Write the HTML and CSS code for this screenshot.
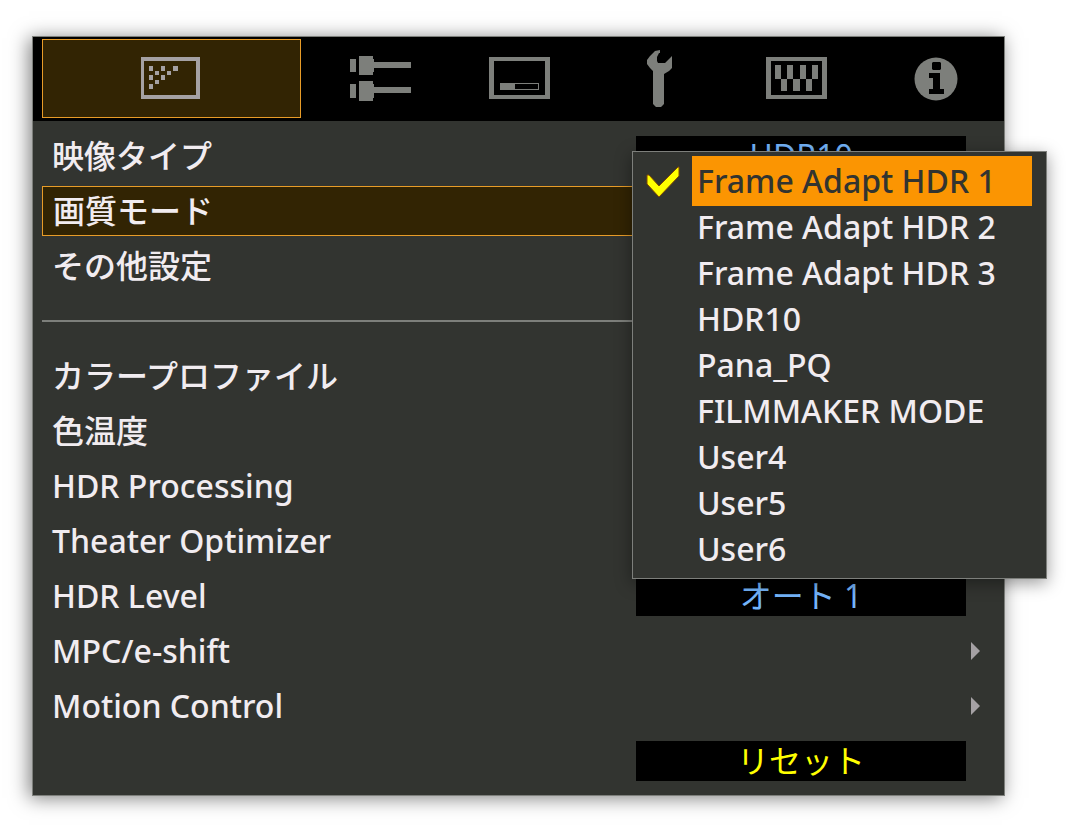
FILE: index.html
```html
<!DOCTYPE html>
<html lang="ja">
<head>
<meta charset="utf-8">
<meta name="viewport" content="width=device-width, initial-scale=1">
<title>画質モード</title>
<link rel="stylesheet" href="styles.css">
</head>
<body>
<main class="panel">
  <nav class="tabs">
    <button class="tab tab-active" type="button" aria-label="画質調整">
      <svg class="icon" width="62" height="60" viewBox="2 1 62 60" shape-rendering="crispEdges" aria-hidden="true">
        <path fill="none" stroke="currentColor" stroke-width="4" d="M3 11H59V49H3Z"/>
        <path fill="currentColor" d="M10 18h4v5h-4zM22 18h4v5h-4zM34 18h5v5h-5zM16 23h4v4h-4zM28 23h4v4h-4zM10 27h4v5h-4zM22 27h4v5h-4zM16 32h4v4h-4zM10 36h4v5h-4z"/>
      </svg>
    </button>
    <button class="tab" type="button" aria-label="入力信号">
      <svg class="icon" width="62" height="60" viewBox="-1 1 62 60" shape-rendering="crispEdges" aria-hidden="true">
        <path fill="currentColor" d="M0 11h6v13H0zM9 8h14v3h1v3h37v6H24v4h-1v3H9zM0 36h6v14H0zM9 33h14v3h1v3h37v6H24v5h-1v3H9z"/>
      </svg>
    </button>
    <button class="tab" type="button" aria-label="設置">
      <svg class="icon" width="62" height="60" viewBox="-1 1 62 60" shape-rendering="crispEdges" aria-hidden="true">
        <path fill="currentColor" fill-rule="evenodd" d="M0 9h61v42H0zM5 13v34h51V13zM11 35h39v7H11zM26 36v5h23v-5z"/>
      </svg>
    </button>
    <button class="tab" type="button" aria-label="表示設定">
      <svg class="icon" width="62" height="60" viewBox="-1 1 62 60" aria-hidden="true">
        <path fill="currentColor" d="M32 2v3h-1l-2 4v4l1 2h7l7-7v12l-3 3-5 3v30l-3 3h-5l-3-3V23l-3-3-3-4v-4l3-4 5-5z"/>
      </svg>
    </button>
    <button class="tab" type="button" aria-label="ファンクション">
      <svg class="icon" width="62" height="60" viewBox="-1 1 62 60" shape-rendering="crispEdges" aria-hidden="true">
        <path fill="currentColor" fill-rule="evenodd" d="M0 9h61v42H0zM5 13v34h51V13z"/>
        <path fill="currentColor" d="M9 17h6v14H9zM21 17h6v14h-6zM34 17h6v14h-6zM46 17h6v14h-6zM15 31h6v12h-6zM27 31h7v12h-7zM40 31h6v12h-6z"/>
      </svg>
    </button>
    <button class="tab" type="button" aria-label="情報">
      <svg class="icon" width="62" height="60" viewBox="-1 0 62 60" aria-hidden="true">
        <circle cx="31" cy="30" r="21.5" fill="currentColor"/>
        <path fill="#000" d="M28 13h7l1 1v6l-1 1h-7l-1-1v-6zM24 24h11v16h4v5H24v-5h4V29h-4z"/>
      </svg>
    </button>
  </nav>

  <ul class="rows">
    <li class="row">
      <span class="label">映像タイプ</span>
      <button class="value" type="button">HDR10</button>
    </li>
    <li class="row">
      <button class="label label-selected" type="button" aria-haspopup="listbox" aria-expanded="true">画質モード</button>
      <div class="anchor">
        <div class="menu" role="listbox" aria-label="画質モード">
          <svg class="check" width="34" height="32" viewBox="0 0 34 32" aria-hidden="true">
            <path fill="#ffff00" stroke="#804800" stroke-width="1" d="M1 9h2l10 11L32 1h1v9L13 31 1 18z"/>
          </svg>
          <button class="option option-active" type="button" role="option" aria-selected="true">Frame Adapt HDR 1</button>
          <button class="option" type="button" role="option">Frame Adapt HDR 2</button>
          <button class="option" type="button" role="option">Frame Adapt HDR 3</button>
          <button class="option" type="button" role="option">HDR10</button>
          <button class="option" type="button" role="option">Pana_PQ</button>
          <button class="option" type="button" role="option">FILMMAKER MODE</button>
          <button class="option" type="button" role="option">User4</button>
          <button class="option" type="button" role="option">User5</button>
          <button class="option" type="button" role="option">User6</button>
        </div>
      </div>
    </li>
    <li class="row"><span class="label">その他設定</span></li>
    <li class="row row-divider" role="separator"></li>
    <li class="row"><span class="label">カラープロファイル</span></li>
    <li class="row"><span class="label">色温度</span></li>
    <li class="row"><span class="label">HDR Processing</span></li>
    <li class="row"><span class="label">Theater Optimizer</span></li>
    <li class="row">
      <span class="label">HDR Level</span>
      <button class="value" type="button">オート 1</button>
    </li>
    <li class="row">
      <button class="label label-link" type="button">MPC/e-shift
        <svg class="arrow" width="9" height="18" viewBox="0 0 9 18" aria-hidden="true"><path fill="currentColor" d="M0 0l9 9-9 9z"/></svg>
      </button>
    </li>
    <li class="row">
      <button class="label label-link" type="button">Motion Control
        <svg class="arrow" width="9" height="18" viewBox="0 0 9 18" aria-hidden="true"><path fill="currentColor" d="M0 0l9 9-9 9z"/></svg>
      </button>
    </li>
    <li class="row"><button class="value value-reset" type="button">リセット</button></li>
  </ul>
</main>
</body>
</html>
```
FILE: styles.css
```css
* {
  box-sizing: border-box;
}

body {
  margin: 0;
  padding: 36px 75px 34px 32px;
  background: #fff;
  color: #f1ecf0;
  font: 500 32px/40px "Noto Sans", "Noto Sans CJK JP", sans-serif;
}

button {
  margin: 0;
  padding: 0;
  border: 0;
  background: none;
  color: inherit;
  font: inherit;
  text-align: left;
}

.panel {
  border: 1px solid #7d7f7b;
  background: #323430;
  box-shadow: -3px 2px 18px rgba(0, 0, 0, 0.5);
}

.tabs {
  display: flex;
  padding: 2px 0 3px 9px;
  background: #000;
}

.tab {
  display: flex;
  flex: 139 1 0;
  align-items: center;
  justify-content: center;
  height: 79px;
  color: #7d7f7b;
}

.tab-active {
  flex-grow: 258;
  margin-right: 10px;
  border: 1px solid #e89c28;
  background: #322403;
  color: #a5a1a4;
}

.icon {
  flex: none;
}

.rows {
  margin: 0;
  padding: 7px 9px;
  list-style: none;
}

.row {
  display: grid;
  grid-template-columns: 1fr 330px 29px;
  align-items: center;
  height: 55px;
}

.row-divider::before {
  content: "";
  grid-column: 1 / -1;
  height: 2px;
  background: #7d7f7b;
}

.label {
  grid-area: 1 / 1;
  padding-left: 10px;
  white-space: nowrap;
}

.label-selected {
  grid-column: 1 / 3;
  height: 50px;
  border: 1px solid #e89c28;
  background: #322403;
}

.label-link {
  display: flex;
  grid-column: 1 / -1;
  align-items: center;
  justify-content: space-between;
  padding-right: 15px;
}

.arrow {
  color: #a5a1a4;
}

.value {
  grid-area: 1 / 2;
  height: 40px;
  background: #000;
  color: #74b4fa;
  font-weight: 400;
  text-align: center;
}

.value-reset {
  color: #ffff00;
}

.anchor {
  position: relative;
  grid-area: 1 / 2;
  align-self: start;
}

.menu {
  position: absolute;
  z-index: 1;
  top: -32px;
  left: -4px;
  display: flex;
  flex-direction: column;
  width: 415px;
  padding: 6px 14px 6px 59px;
  border: 1px solid #7d7f7b;
  background: #323430;
  box-shadow: 0 4px 16px rgba(0, 0, 0, 0.4);
}

.option {
  height: 46px;
  padding-left: 5px;
  white-space: nowrap;
}

.option-active {
  height: 50px;
  margin: -2px 0;
  background: #fb9502;
  color: #323430;
}

.check {
  position: absolute;
  top: 14px;
  left: 13px;
}
```
